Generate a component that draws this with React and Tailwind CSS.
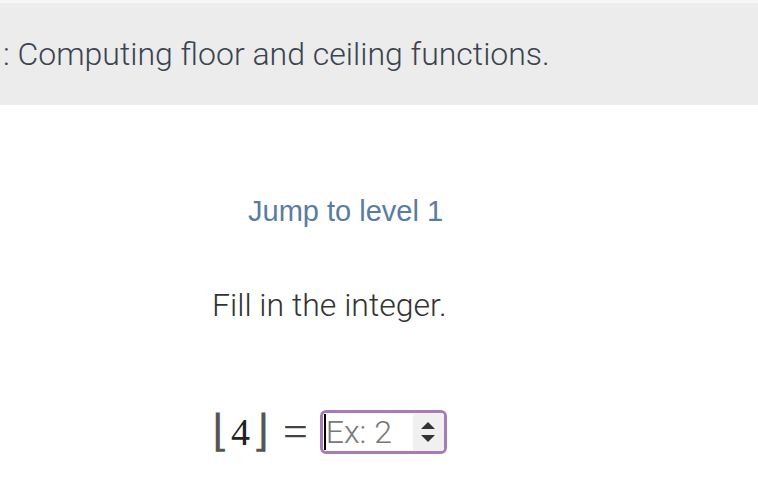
import React from 'react';

const App = () => {
  return (
    <div className="w-[758px] h-[488px] bg-white overflow-hidden" style={{ fontFamily: 'Roboto, "Liberation Sans", sans-serif' }}>
      <div className="h-[3px] bg-[#f7f7f7]" />
      <div className="h-[102px] bg-[#ececec] flex items-center pl-[3px]">
        <h2 className="text-[32px] font-light text-[#3a4450]">: Computing floor and ceiling functions.</h2>
      </div>

      <div className="pt-[85px] pl-[248px]">
        <a className="text-[29px] text-[#5a7ca3]" style={{ fontFamily: '"Liberation Sans", Arial, sans-serif' }}>Jump to level 1</a>
      </div>

      <div className="pt-[47px] pl-[212px]">
        <p className="text-[32px] font-light text-[#333]">Fill in the integer.</p>
      </div>

      <div className="pt-[81px] pl-[212px] flex items-center">
        <div className="flex items-center text-[#222] leading-none" style={{ fontFamily: '"Liberation Serif", serif' }}>
          <span className="text-[44px] text-[#555]">⌊</span>
          <span className="text-[38px] ml-[2px] mr-[2px]">4</span>
          <span className="text-[44px] text-[#555]">⌋</span>
          <span className="text-[44px] ml-[14px] mr-[12px] text-[#444]">=</span>
        </div>
        <div className="shrink-0 w-[127px] h-[44px] border-[3px] border-[#a97bb5] rounded-[6px] flex items-stretch overflow-hidden bg-white">
          <div className="flex-1 flex items-center pl-[1px]">
            <div className="w-[2px] h-[36px] bg-black" />
            <span className="text-[32px] text-[#777] font-light leading-none">Ex: 2</span>
          </div>
          <div className="w-[31px] bg-[#f0f0f0] flex flex-col items-center justify-center gap-[6px]">
            <svg width="14" height="7" viewBox="0 0 14 7"><path d="M7 0 L14 7 L0 7 Z" fill="#333" /></svg>
            <svg width="14" height="7" viewBox="0 0 14 7"><path d="M0 0 L14 0 L7 7 Z" fill="#333" /></svg>
          </div>
        </div>
      </div>
    </div>
  );
};

export default App;
